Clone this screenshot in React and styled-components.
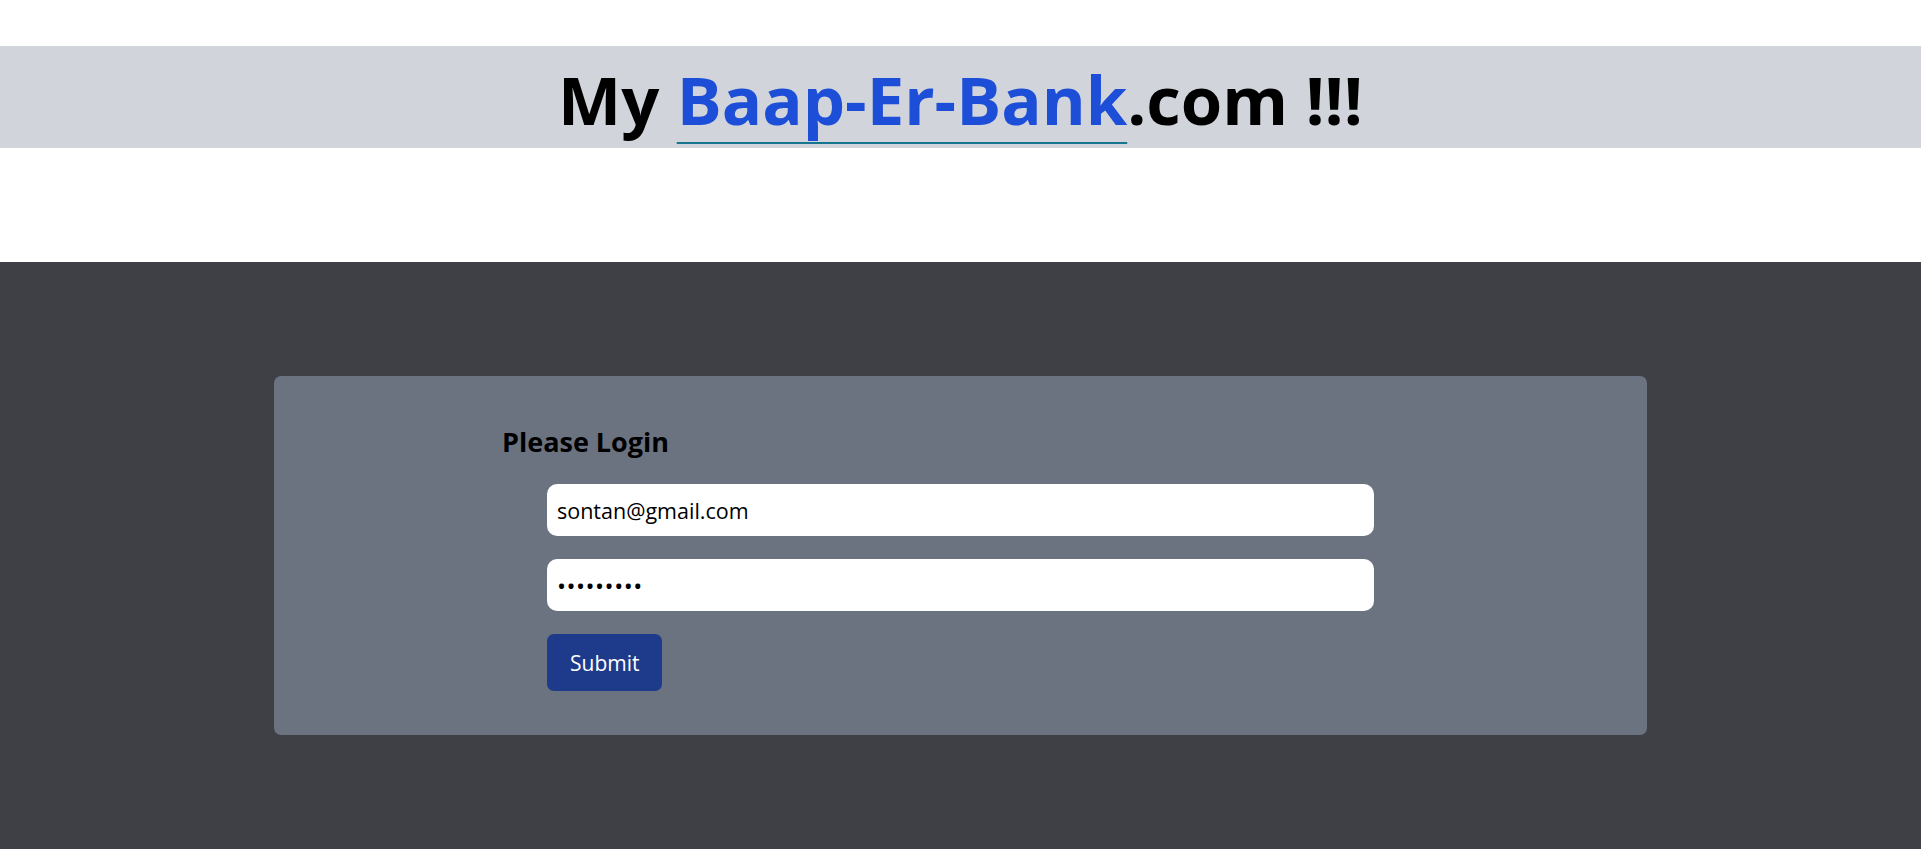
import styled, { createGlobalStyle } from 'styled-components';

const GlobalStyle = createGlobalStyle`
  html, body {
    margin: 0;
    padding: 0;
    background: #ffffff;
    font-family: 'Open Sans', 'Noto Sans', Arial, sans-serif;
  }
  * {
    box-sizing: border-box;
  }
`;

function App() {
  return (
    <>
      <GlobalStyle />
      <Header>
        <Banner>
          <Title>
            My <BrandLink href="#">Baap-Er-Bank</BrandLink>.com !!!
          </Title>
        </Banner>
      </Header>
      <Main>
        <Card>
          <Heading>Please Login</Heading>
          <Form onSubmit={(e) => e.preventDefault()}>
            <Input type="email" defaultValue="sontan@gmail.com" />
            <Input type="password" defaultValue="123456789" $secret />
            <SubmitBtn type="submit">Submit</SubmitBtn>
          </Form>
        </Card>
      </Main>
    </>
  );
}

const Header = styled.header`
  padding: 46px 0 114px;
  background: #ffffff;
`;

const Banner = styled.div`
  height: 102px;
  background-color: #d1d5db;
  display: flex;
  justify-content: center;
`;

const Title = styled.h1`
  margin: 0;
  padding-top: 20px;
  font-size: 67px;
  line-height: 67px;
  font-weight: 700;
  color: #000000;
  white-space: nowrap;
`;

const BrandLink = styled.a`
  color: #1d4ed8;
  text-decoration: underline;
  text-decoration-color: #16758f;
  text-decoration-thickness: 2px;
  text-underline-offset: 17px;
`;

const Main = styled.main`
  min-height: 587px;
  background-color: #3f3f46;
  padding: 114px 0;
`;

const Card = styled.section`
  width: 1373px;
  margin: 0 auto;
  background-color: #6b7280;
  border-radius: 7px;
  padding: 46px 0 44px 228px;
`;

const Heading = styled.h2`
  margin: 0 0 22px;
  font-size: 27px;
  line-height: 40px;
  font-weight: 700;
  color: #000000;
`;

const Form = styled.form`
  display: flex;
  flex-direction: column;
  align-items: flex-start;
  gap: 23px;
  padding-left: 45px;
`;

const Input = styled.input`
  width: 827px;
  height: 52px;
  border: none;
  border-radius: 10px;
  background: #ffffff;
  padding: 0 10px;
  font-family: 'Open Sans', 'Noto Sans', Arial, sans-serif;
  font-size: ${(props) => (props.$secret ? '24px' : '21.5px')};
  letter-spacing: ${(props) => (props.$secret ? '0.5px' : '0')};
  color: #000000;
  outline: none;
`;

const SubmitBtn = styled.button`
  height: 57px;
  padding: 0 23px;
  border: none;
  border-radius: 7px;
  background-color: #1e3a8a;
  color: #ffffff;
  font-family: 'Open Sans', 'Noto Sans', Arial, sans-serif;
  font-size: 21px;
  cursor: pointer;
`;

export default App;
